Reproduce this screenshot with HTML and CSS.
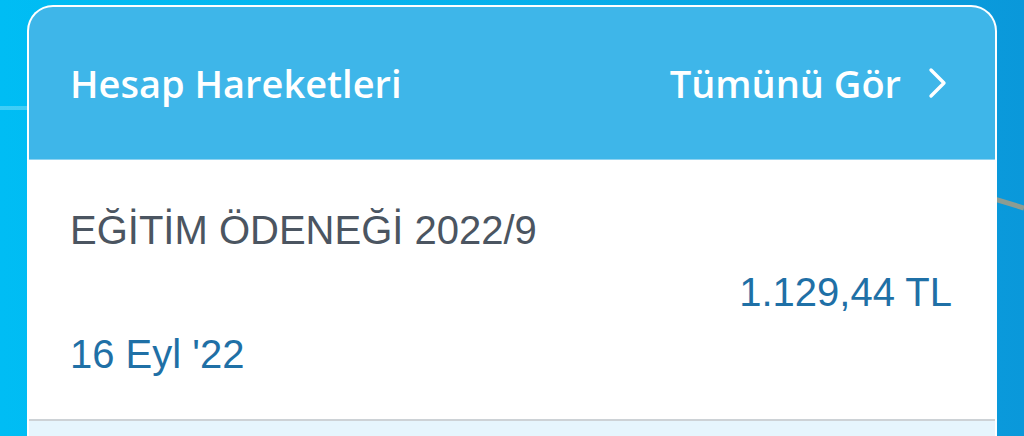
FILE: index.html
```html
<!DOCTYPE html>
<html lang="tr">
<head>
	<meta charset="utf-8">
	<title>Hesap Hareketleri</title>
	<link rel="stylesheet" href="styles.css">
</head>
<body>
	<svg class="backdrop-line" width="40" height="30" viewBox="0 0 40 30">
		<path d="M0 6 L40 18" stroke="#8d9c92" stroke-width="5" fill="none"/>
	</svg>
	<div class="card">
		<div class="card-header">
			<span class="card-title">Hesap Hareketleri</span>
			<a class="see-all" href="#">
				Tümünü Gör
				<svg class="chevron" width="22" height="32" viewBox="0 0 22 32">
					<path d="M4 3 L17 16 L4 29" stroke="#fff" stroke-width="3.4" fill="none" stroke-linecap="round" stroke-linejoin="round"/>
				</svg>
			</a>
		</div>
		<div class="transaction">
			<div class="tx-title">EĞİTİM ÖDENEĞİ 2022/9</div>
			<div class="tx-amount">1.129,44 TL</div>
			<div class="tx-date">16 Eyl '22</div>
		</div>
		<div class="transaction-next"></div>
	</div>
</body>
</html>
```

FILE: styles.css
```css
body {
	margin: 0;
	padding: 5px 27px 0 27px;
	height: 436px;
	box-sizing: border-box;
	overflow: hidden;
	position: relative;
	background:
		linear-gradient(to bottom, transparent 106px, rgba(255, 255, 255, 0.25) 106px, rgba(255, 255, 255, 0.25) 110px, transparent 110px) no-repeat 0 0 / 30px 100%,
		linear-gradient(to right, #00bdf4 0%, #06b0ec 50%, #0a98da 100%);
}

.backdrop-line {
	position: absolute;
	right: 0;
	top: 190px;
}

.card {
	position: relative;
	border: 2px solid rgba(255, 255, 255, 0.85);
	border-bottom: none;
	border-radius: 26px 26px 0 0;
	overflow: hidden;
	background-color: #ffffff;
	height: 440px;
}

.card-header {
	display: flex;
	justify-content: space-between;
	align-items: center;
	height: 152px;
	padding: 0 46px 0 41px;
	background-color: #3eb6e9;
	border-bottom: 1px solid #8fd3f1;
	font-family: "Open Sans", "Noto Sans", sans-serif;
	font-weight: 600;
	font-size: 38px;
	color: #ffffff;
}

.see-all {
	display: flex;
	align-items: center;
	color: #ffffff;
	text-decoration: none;
}

.chevron {
	margin-left: 26px;
}

.transaction {
	display: flex;
	flex-direction: column;
	padding: 39px 43px 34px 41px;
	font-family: "Liberation Sans", Arial, sans-serif;
	font-size: 40px;
	line-height: 62px;
	border-bottom: 2px solid #cdd2d6;
}

.tx-title {
	color: #4b5561;
}

.tx-amount {
	align-self: flex-end;
	color: #1f70a6;
}

.tx-date {
	color: #1f70a6;
}

.transaction-next {
	height: 40px;
	background-color: #e6f5fd;
}
```
